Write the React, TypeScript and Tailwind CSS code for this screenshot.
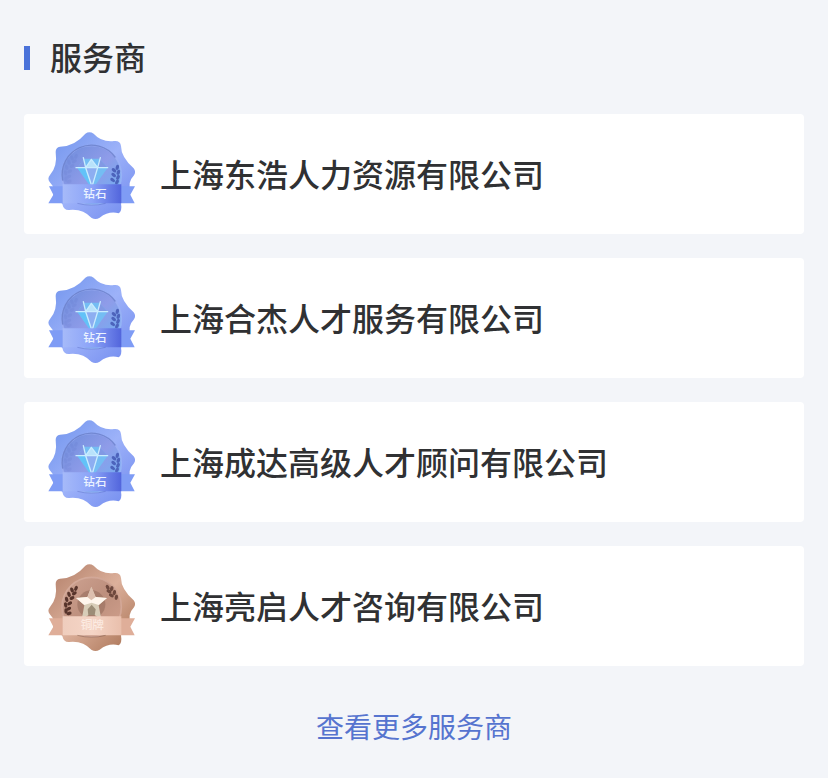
import { useId } from "react";

type Level = "diamond" | "bronze";

const providers: { name: string; level: Level }[] = [
  { name: "上海东浩人力资源有限公司", level: "diamond" },
  { name: "上海合杰人才服务有限公司", level: "diamond" },
  { name: "上海成达高级人才顾问有限公司", level: "diamond" },
  { name: "上海亮启人才咨询有限公司", level: "bronze" },
];

const palettes = {
  diamond: {
    label: "钻石",
    edge: ["#6f93ec", "#9db2f9", "#6f88ee"],
    disc: ["#6c8cdb", "#8f9ce9", "#68b4f4"],
    ring: "#a9bcfb",
    ribbon: ["#a6baf9", "#8ba3f8", "#5265dc"],
    tail: "#7f9cf5",
    leaf: "#4054b0",
    text: "#eaf2ff",
  },
  bronze: {
    label: "铜牌",
    edge: ["#b07c66", "#dcb09b", "#a66f50"],
    disc: ["#cfa493", "#bd8f7d", "#d3a28e"],
    ring: "#dcb5a5",
    ribbon: ["#efcdbd", "#f5d5c6", "#e9bfac"],
    tail: "#dfae99",
    leaf: "#4c2a22",
    text: "#fff3ec",
  },
};

const leftLeaves = [
  [108, 97, 25],
  [96, 102, -25],
  [103, 112, 55],
  [87, 115, -20],
  [96, 126, 60],
  [80, 130, -15],
  [89, 142, 60],
  [77, 147, -10],
  [86, 158, 65],
  [78, 165, -5],
  [87, 172, 75],
];

const rightLeaves = {
  diamond: [
    [232, 130, 15],
    [222, 139, -50],
    [235, 145, 20],
    [221, 153, -50],
    [234, 160, 25],
    [218, 168, -55],
    [231, 174, 30],
  ],
  bronze: [
    [203, 94, -30],
    [215, 98, 20],
    [207, 106, -60],
    [223, 110, 15],
    [214, 118, -60],
    [229, 124, 10],
  ],
};

function Leaves({ items, fill, opacity }: { items: number[][]; fill: string; opacity: number }) {
  return (
    <g fill={fill} opacity={opacity}>
      {items.map(([x, y, angle]) => (
        <ellipse key={`${x}-${y}`} cx={x} cy={y} rx="5" ry="8" transform={`rotate(${angle} ${x} ${y})`} />
      ))}
    </g>
  );
}

function Gradient({ id, colors, diagonal }: { id: string; colors: string[]; diagonal?: boolean }) {
  return (
    <linearGradient id={id} x1="0" y1="0" x2="1" y2={diagonal ? "1" : "0"}>
      <stop offset="0" stopColor={colors[0]} />
      <stop offset="0.5" stopColor={colors[1]} />
      <stop offset="1" stopColor={colors[2]} />
    </linearGradient>
  );
}

function Diamond() {
  return (
    <g strokeLinejoin="round" strokeLinecap="round">
      <path d="M112 131 L132 104 H178 L203 131 L157 196 Z" fill="#74bdf3" />
      <path d="M112 131 L132 104 L137 131 Z M178 104 L203 131 H173 Z" fill="#8299e4" />
      <path d="M112 131 H137 L157 194 Z" fill="#62c2f8" />
      <path d="M137 131 L154 106 L173 131 Z" fill="#b9e2fa" />
      <path d="M137 131 H173 L157 192 Z" fill="#8daef1" />
      <path
        d="M108 131 H203 M130 101 L137 131 L156 188 L173 131 L181 101 M137 131 L154 106 L173 131"
        fill="none"
        stroke="#c9ecff"
        strokeWidth="4"
      />
    </g>
  );
}

function Star() {
  return (
    <g>
      <circle cx="154" cy="145" r="42" fill="#8d6656" opacity="0.5" />
      <path d="M154 92 L167 123 L201 126 L176 148 L184 190 L155 172 L125 190 L133 148 L108 126 L142 123 Z" fill="#d8cdb8" />
      <path d="M154 92 L167 123 L155 136 L142 123 Z" fill="#ddbfae" />
      <path d="M108 126 L142 123 L154 133 L167 123 L201 126 L176 147 L155 140 L133 147 Z" fill="#fff6ed" />
      <path d="M155 146 L167 160 L164 178 H145 L143 160 Z" fill="#9c8d77" />
    </g>
  );
}

function Badge({ level }: { level: Level }) {
  const id = useId();
  const p = palettes[level];

  return (
    <svg viewBox="12 6 288 288" className="size-24 shrink-0" role="img" aria-label={p.label}>
      <defs>
        <Gradient id={`${id}-edge`} colors={p.edge} diagonal />
        <Gradient id={`${id}-disc`} colors={p.disc} diagonal />
        <Gradient id={`${id}-ribbon`} colors={p.ribbon} />
      </defs>
      <path
        d="M136 29 Q148 21 161 29 Q184 55 222 51 Q241 49 243 66 Q243 99 281 133 Q289 143 282 154 Q260 177 273 204 L243 238 Q247 262 236 268 Q207 260 179 281 Q167 289 155 282 Q128 253 87 258 Q71 259 67 240 L39 212 Q49 196 29 174 Q21 163 30 153 Q53 127 47 84 Q47 70 60 68 Q104 67 136 29 Z"
        fill={`url(#${id}-edge)`}
      />
      <circle cx="155" cy="153" r="91" fill={`url(#${id}-disc)`} />
      <circle cx="155" cy="153" r="89" fill="none" stroke={p.ring} strokeWidth="5" opacity="0.55" />
      {level === "diamond" && (
        <path
          d="M68 168 A88 88 0 0 1 225 99"
          fill="none"
          stroke="#4c64b4"
          strokeWidth="4"
          strokeLinecap="round"
          opacity="0.5"
        />
      )}
      <Leaves items={leftLeaves} fill={p.leaf} opacity={level === "diamond" ? 0.08 : 0.9} />
      <Leaves items={rightLeaves[level]} fill={p.leaf} opacity={level === "diamond" ? 0.8 : 0.7} />
      {level === "diamond" ? <Diamond /> : <Star />}
      <path d="M27 187 H69 V238 H25 L40 212 Z M243 187 H285 L271 212 L284 238 H243 Z" fill={p.tail} />
      <path d="M68 181 H244 V238 H68 Z" fill={`url(#${id}-ribbon)`} />
      <path d="M112 238 Q154 249 197 238" fill="none" stroke={p.leaf} strokeWidth="3" opacity="0.3" />
      <text
        x={level === "diamond" ? 165 : 157}
        y={level === "diamond" ? 221 : 218}
        textAnchor="middle"
        fontSize="35"
        fontWeight="500"
        fill={p.text}
        opacity={level === "diamond" ? 1 : 0.75}
      >
        {p.label}
      </text>
    </svg>
  );
}

export default function App() {
  return (
    <main className="min-h-screen bg-[#f3f5f9] px-6 pt-8.5 pb-8 font-['Noto_Sans_CJK_SC',sans-serif] text-[#303133]">
      <section>
        <div className="flex items-center gap-5">
          <span className="h-6 w-1.5 bg-[#4a72d9]" />
          <h1 className="pb-1 text-[32px] leading-11 font-medium">服务商</h1>
        </div>

        <ul className="mt-8 flex flex-col gap-6">
          {providers.map((provider) => (
            <li key={provider.name} className="flex min-h-30 items-center gap-5 rounded bg-white px-5 py-3">
              <Badge level={provider.level} />
              <h2 className="pb-0.5 text-[32px] leading-11 font-medium">{provider.name}</h2>
            </li>
          ))}
        </ul>

        <div className="mt-10 text-center">
          <a href="#providers" className="text-[28px] leading-10 text-[#5674cf]">
            查看更多服务商
          </a>
        </div>
      </section>
    </main>
  );
}
